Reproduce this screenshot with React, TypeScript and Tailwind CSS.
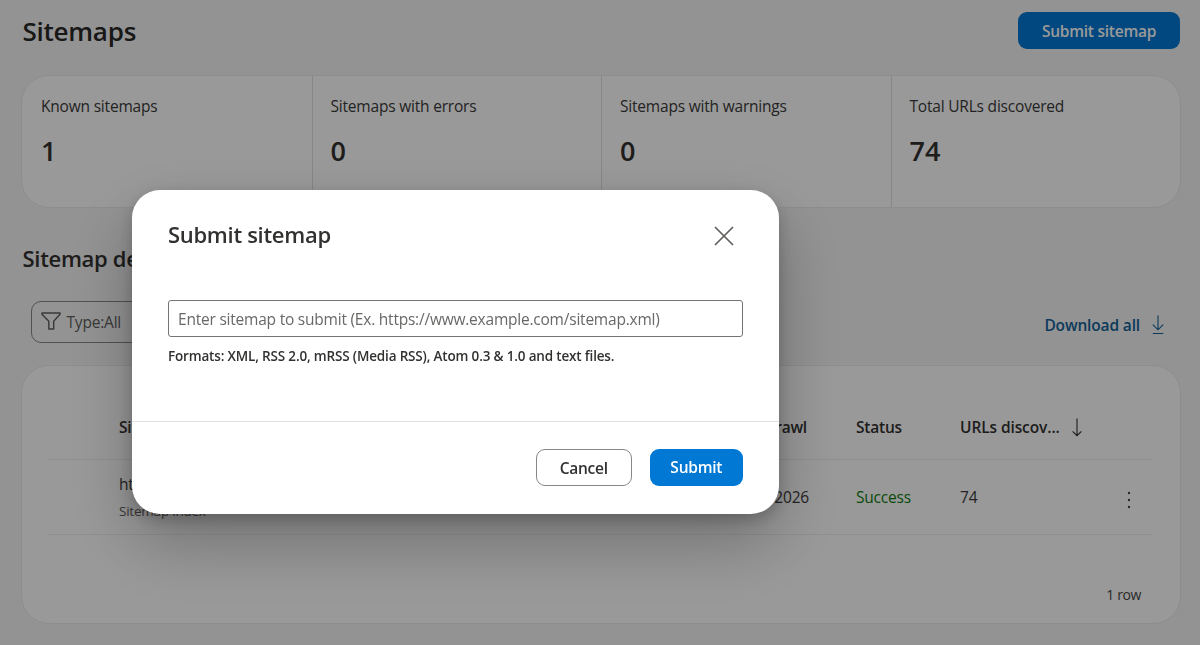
import React from 'react';

const stats = [
  { label: 'Known sitemaps', value: '1' },
  { label: 'Sitemaps with errors', value: '0' },
  { label: 'Sitemaps with warnings', value: '0' },
  { label: 'Total URLs discovered', value: '74' },
];

const FilterIcon = () => (
  <svg width="20" height="18" viewBox="0 0 20 18" fill="none" stroke="currentColor" strokeWidth="1.4" strokeLinejoin="round">
    <path d="M1 1h18v1.2l-6.3 7V17H7.8V9.2L1 2.2z" />
  </svg>
);

const DownloadIcon = () => (
  <svg width="12" height="20" viewBox="0 0 12 20" fill="none" stroke="currentColor" strokeWidth="1.1">
    <path d="M6 .5v14.2M.8 9.6 6 14.8l5.2-5.2M.8 18.5h10.5" />
  </svg>
);

const ArrowDownIcon = () => (
  <svg width="10" height="19" viewBox="0 0 10 19" fill="none" stroke="currentColor" strokeWidth="1.1">
    <path d="M5 .5v17M.6 13.3 5 17.7l4.4-4.4" />
  </svg>
);

const CloseIcon = () => (
  <svg width="20" height="20" viewBox="0 0 20 20" fill="none" stroke="currentColor" strokeWidth="1.7">
    <path d="m1 1 18 18M19 1 1 19" />
  </svg>
);

const MoreIcon = () => (
  <svg width="4" height="18" viewBox="0 0 4 18" fill="currentColor">
    <circle cx="2" cy="2" r="1.2" />
    <circle cx="2" cy="9" r="1.2" />
    <circle cx="2" cy="16" r="1.2" />
  </svg>
);

const SitemapsPage = () => (
  <div className="h-full bg-[#f5f5f5] pl-[21px] pr-[19px] pt-3">
    <header className="flex h-[37px] items-center justify-between pr-px">
      <h1 className="pl-[1.5px] pt-px text-[26px] leading-9 font-semibold tracking-[-0.25px] text-[#292827]">Sitemaps</h1>
      <button className="h-[37px] w-[162px] rounded-[9px] bg-[#0078d4] pt-0.5 text-[15.5px] font-semibold tracking-[-0.25px] text-white">
        Submit sitemap
      </button>
    </header>

    <section className="mt-[26px] grid h-[133px] grid-cols-4 rounded-[28px] border border-[#ebebeb] bg-white">
      {stats.map((stat) => (
        <div key={stat.label} className="border-l border-[#e1e1e1] pl-[18px] pt-[18px] first:border-l-0 first:pl-[19px]">
          <p className="text-[15.5px] leading-6 tracking-[-0.2px] text-[#3b3a39]">{stat.label}</p>
          <p className="mt-[15px] text-[27px] leading-9 font-semibold text-[#323130]">{stat.value}</p>
        </div>
      ))}
    </section>

    <h2 className="mt-[34px] pl-[1.5px] text-[22px] leading-8 font-semibold tracking-[-0.3px] text-[#323130]">Sitemap details</h2>

    <div className="mt-[27px] flex h-[42px] justify-between pl-[9.5px] pr-[17px]">
      <button className="flex h-[42px] w-[140px] items-center gap-1.5 rounded-[10px] border border-[#8a8886] pb-0.5 pl-[9px] text-[15.5px] tracking-[-0.2px] text-[#605e5c]">
        <FilterIcon />
        <span className="pt-1">Type:All</span>
      </button>
      <button className="flex items-center gap-3 pt-[5px] text-[15.5px] font-semibold tracking-[-0.15px] text-[#136197]">
        <span className="pt-0.5">Download all</span>
        <DownloadIcon />
      </button>
    </div>

    <section className="mt-[22px] h-[259px] rounded-[28px] border border-[#ebebeb] bg-white pl-[26px] pr-7 pt-[28px] text-[15.5px] tracking-[-0.2px]">
      <div className="grid h-[66px] grid-cols-[567px_170px_104px_1fr] items-center border-b border-[#efefef] pl-[71px] pt-0.5 font-semibold text-[#323130]">
        <span>Sitemap</span>
        <span className="pr-[49px] text-right">Last crawl</span>
        <span>Status</span>
        <span className="flex items-center gap-3 tracking-[-0.1px]">
          URLs discov...
          <ArrowDownIcon />
        </span>
      </div>
      <div className="grid h-[75px] grid-cols-[567px_170px_104px_1fr] items-center border-b border-[#efefef] pl-[71px] pt-0.5 text-[#3b3a39]">
        <div className="pb-0.5">
          <p className="leading-6">https://www.example.com/sitemap.xml</p>
          <p className="mt-[3px] text-[13.5px] leading-6 tracking-[-0.22px] text-[#605e5c]">Sitemap index</p>
        </div>
        <span className="pr-[47px] text-right">1/12/2026</span>
        <span className="text-[#107c10]">Success</span>
        <span className="flex items-center justify-between pr-[21.5px]">
          74
          <span className="pt-1 text-[#484644]"><MoreIcon /></span>
        </span>
      </div>
      <p className="pr-[11px] pt-12 text-right text-[14px] leading-6 font-medium tracking-[-0.4px] text-[#484644]">1 row</p>
    </section>
  </div>
);

const SubmitDialog = () => (
  <div className="fixed inset-0 bg-black/40 pl-[131.5px] pt-[190px]">
    <div
      role="dialog"
      className="h-[324px] w-[647.5px] rounded-[28px] bg-white text-[#323130] shadow-[0_29px_66px_0_rgba(0,0,0,0.26),0_6px_16px_0_rgba(0,0,0,0.22)]"
    >
      <div className="h-[232px] border-b border-[#e1e1e1] px-[36.5px] pt-[28px]">
        <div className="flex h-9 items-center justify-between pr-[9px]">
          <h2 className="pb-[3px] text-[22px] font-semibold tracking-[-0.3px]">Submit sitemap</h2>
          <button aria-label="Close" className="text-[#605e5c]"><CloseIcon /></button>
        </div>
        <input
          className="mt-[46px] block h-[37px] w-full rounded-[3px] border border-[#767473] px-[9px] pt-px text-[15.5px] tracking-[-0.22px] placeholder:text-[#6a6866]"
          placeholder="Enter sitemap to submit (Ex. https://www.example.com/sitemap.xml)"
        />
        <p className="mt-[7px] whitespace-nowrap text-[13.5px] leading-6 font-semibold tracking-[-0.17px]">
          Formats: XML, RSS 2.0, mRSS (Media RSS), Atom 0.3 &amp; 1.0 and text files.
        </p>
      </div>
      <div className="flex justify-end gap-[18px] pr-[36.5px] pt-[27px] text-[15.5px] font-semibold tracking-[-0.25px]">
        <button className="h-[37px] w-[96.5px] rounded-[9px] border border-[#8a8886] pt-0.5">Cancel</button>
        <button className="h-[37px] w-[92.5px] rounded-[9px] bg-[#0078d4] text-white">Submit</button>
      </div>
    </div>
  </div>
);

const App = () => {
  return (
    <div className="h-[645px] w-full overflow-hidden font-['Open_Sans','Noto_Sans',sans-serif]">
      <SitemapsPage />
      <SubmitDialog />
    </div>
  );
};

export default App;
